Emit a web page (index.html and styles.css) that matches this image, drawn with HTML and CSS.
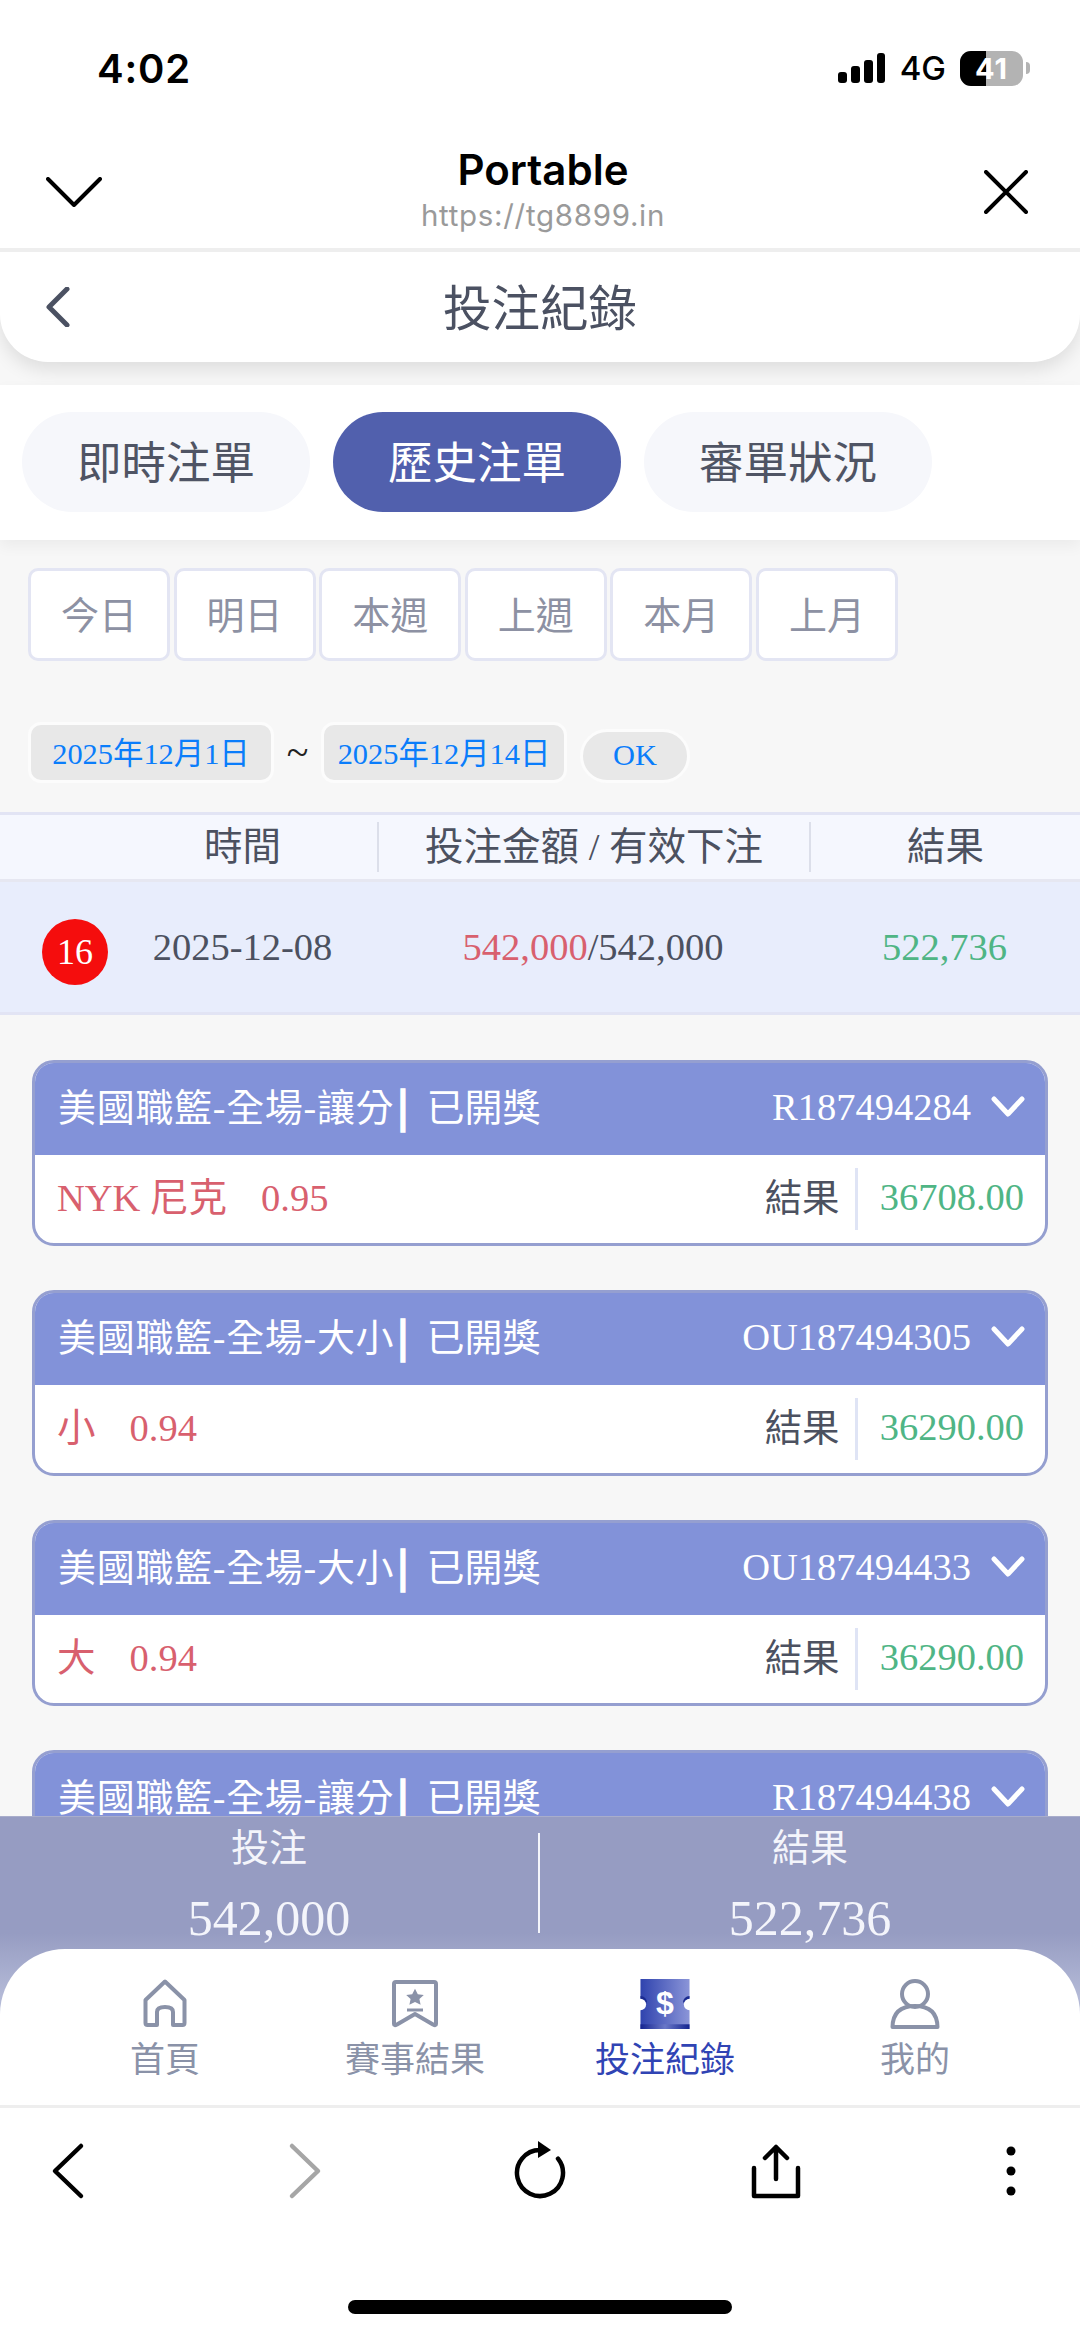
FILE: index.html
```html
<!DOCTYPE html>
<html lang="zh-Hant">
<head>
<meta charset="utf-8">
<title>投注紀錄</title>
<link rel="stylesheet" href="styles.css">
</head>
<body>
<div class="status">
  <span class="time">4:02</span>
  <div class="status-right">
    <svg class="signal" width="47" height="30" viewBox="0 0 47 30"><rect x="0" y="19" width="9" height="11" rx="3"/><rect x="13" y="13" width="9" height="17" rx="3"/><rect x="26" y="7" width="9" height="23" rx="3"/><rect x="39" y="0" width="8" height="30" rx="3"/></svg>
    <span class="net">4G</span>
    <div class="battery"><span class="battery-fill"></span><span class="battery-num">41</span></div>
    <span class="battery-nub"></span>
  </div>
</div>
<header class="portal">
  <svg class="portal-down" width="56" height="30" viewBox="0 0 56 30"><path d="M2 2 L28 28 L54 2" fill="none" stroke="#000" stroke-width="4" stroke-linecap="round" stroke-linejoin="round"/></svg>
  <div class="portal-title"><div class="portal-name">Portable</div><div class="portal-url">https://tg8899.in</div></div>
  <svg class="portal-close" width="44" height="44" viewBox="0 0 44 44"><path d="M2 2 L42 42 M42 2 L2 42" fill="none" stroke="#000" stroke-width="4" stroke-linecap="round"/></svg>
</header>
<main class="main">
  <div class="app-head">
    <svg class="app-back" width="24" height="40" viewBox="0 0 24 40"><path d="M21 2 L3 20 L21 38" fill="none" stroke="#4b5162" stroke-width="5" stroke-linecap="round" stroke-linejoin="round"/></svg>
    <h1 class="app-title">投注紀錄</h1>
  </div>
  <div class="tabs">
    <div class="tab">即時注單</div>
    <div class="tab tab-on">歷史注單</div>
    <div class="tab">審單狀況</div>
  </div>
  <div class="ranges">
    <div class="range">今日</div><div class="range">明日</div><div class="range">本週</div><div class="range">上週</div><div class="range">本月</div><div class="range">上月</div>
  </div>
  <div class="dates">
    <div class="date">2025年12月1日</div>
    <span class="tilde">~</span>
    <div class="date">2025年12月14日</div>
    <div class="ok">OK</div>
  </div>
  <div class="grid-row thead">
    <div></div><div class="th">時間</div><div class="th th-line">投注金額 / 有效下注</div><div class="th th-line">結果</div>
  </div>
  <div class="grid-row tbody">
    <div class="badge-cell"><span class="badge">16</span></div>
    <div class="td">2025-12-08</div>
    <div class="td"><span class="red">542,000</span>/542,000</div>
    <div class="td green">522,736</div>
  </div>
  <div class="cards">
    <article class="card">
      <div class="card-head"><div class="card-title"><span class="league">美國職籃-全場-讓分</span><b class="bar">|</b>已開獎</div><div class="card-id">R187494284</div><svg class="card-chev" width="34" height="22" viewBox="0 0 34 22"><path d="M3 3 L17 18 L31 3" fill="none" stroke="#fff" stroke-width="5" stroke-linecap="round" stroke-linejoin="round"/></svg></div>
      <div class="card-body"><div class="pick"><span>NYK 尼克</span><span>0.95</span></div><div class="res-label">結果</div><div class="res-val">36708.00</div></div>
    </article>
    <article class="card">
      <div class="card-head"><div class="card-title"><span class="league">美國職籃-全場-大小</span><b class="bar">|</b>已開獎</div><div class="card-id">OU187494305</div><svg class="card-chev" width="34" height="22" viewBox="0 0 34 22"><path d="M3 3 L17 18 L31 3" fill="none" stroke="#fff" stroke-width="5" stroke-linecap="round" stroke-linejoin="round"/></svg></div>
      <div class="card-body"><div class="pick"><span>小</span><span>0.94</span></div><div class="res-label">結果</div><div class="res-val">36290.00</div></div>
    </article>
    <article class="card">
      <div class="card-head"><div class="card-title"><span class="league">美國職籃-全場-大小</span><b class="bar">|</b>已開獎</div><div class="card-id">OU187494433</div><svg class="card-chev" width="34" height="22" viewBox="0 0 34 22"><path d="M3 3 L17 18 L31 3" fill="none" stroke="#fff" stroke-width="5" stroke-linecap="round" stroke-linejoin="round"/></svg></div>
      <div class="card-body"><div class="pick"><span>大</span><span>0.94</span></div><div class="res-label">結果</div><div class="res-val">36290.00</div></div>
    </article>
    <article class="card">
      <div class="card-head"><div class="card-title"><span class="league">美國職籃-全場-讓分</span><b class="bar">|</b>已開獎</div><div class="card-id">R187494438</div><svg class="card-chev" width="34" height="22" viewBox="0 0 34 22"><path d="M3 3 L17 18 L31 3" fill="none" stroke="#fff" stroke-width="5" stroke-linecap="round" stroke-linejoin="round"/></svg></div>
    </article>
  </div>
</main>
<section class="bottom">
  <div class="summary">
    <div class="sum-cell"><div class="sum-label">投注</div><div class="sum-val">542,000</div></div>
    <div class="sum-line"></div>
    <div class="sum-cell"><div class="sum-label">結果</div><div class="sum-val">522,736</div></div>
  </div>
  <nav class="nav">
    <div class="nav-item">
      <svg class="nav-icon" width="50" height="50" viewBox="0 0 50 50"><path d="M25 2.500 L44.500 21 V44 Q44.500 46 42.500 46 H33 V33 Q33 28 25 28 Q17 28 17 33 V46 H7.500 Q5.500 46 5.500 44 V21 Z" fill="none" stroke="#8a92a8" stroke-width="4" stroke-linejoin="round"/></svg>
      <span>首頁</span>
    </div>
    <div class="nav-item">
      <svg class="nav-icon" width="50" height="50" viewBox="0 0 50 50"><path d="M4 5 Q4 3 6 3 H44 Q46 3 46 5 V45 Q46 47 43 45.500 L25 35 L7 45.500 Q4 47 4 45 Z" fill="none" stroke="#8a92a8" stroke-width="4" stroke-linejoin="round"/><path d="M25 9 L28.500 16 L36 17 L30.500 22 L32 29 L25 25.500 L18 29 L19.500 22 L14 17 L21.500 16 Z" fill="#8a92a8" transform="translate(5 2.500) scale(.8)"/><path d="M17 31 H33" stroke="#8a92a8" stroke-width="3"/></svg>
      <span>賽事結果</span>
    </div>
    <div class="nav-item nav-on">
      <svg class="nav-icon" width="52" height="53" viewBox="0 0 52 53"><defs><linearGradient id="tk" x1="0" x2="1" y1="0" y2="0"><stop offset="0" stop-color="#2f43ae"/><stop offset="1" stop-color="#8b95d8"/></linearGradient><linearGradient id="tb" x1="0" x2="1" y1="0" y2="0"><stop offset="0" stop-color="#142490"/><stop offset=".5" stop-color="#6a78c8"/><stop offset="1" stop-color="#142490"/></linearGradient></defs><rect width="52" height="53" fill="url(#tk)"/><rect y="48" width="52" height="5" fill="url(#tb)"/><path d="M0 18 A7 7 0 0 1 7 25 L0 25 Z M52 18 A7 7 0 0 0 45 25 L52 25 Z" fill="#1a2a90"/><circle cx="0" cy="27" r="6" fill="#fff"/><circle cx="52" cy="27" r="6" fill="#fff"/><text class="ticket-sign" x="26" y="37">$</text></svg>
      <span>投注紀錄</span>
    </div>
    <div class="nav-item">
      <svg class="nav-icon" width="50" height="50" viewBox="0 0 50 50"><circle cx="25" cy="15" r="13" fill="none" stroke="#8a92a8" stroke-width="4"/><path d="M2.500 48 Q3 27 25 27 Q47 27 47.500 48 Z" fill="none" stroke="#8a92a8" stroke-width="4" stroke-linejoin="round"/></svg>
      <span>我的</span>
    </div>
  </nav>
</section>
<footer class="toolbar">
  <div class="tool-row">
    <svg class="tool" width="60" height="60" viewBox="0 0 60 60"><path d="M42 5 L16 30 L42 55" fill="none" stroke="#000" stroke-width="4.500" stroke-linecap="round" stroke-linejoin="round"/></svg>
    <svg class="tool" width="60" height="60" viewBox="0 0 60 60"><path d="M17 5 L43 30 L17 55" fill="none" stroke="#a6a6a6" stroke-width="4.500" stroke-linecap="round" stroke-linejoin="round"/></svg>
    <svg class="tool" width="60" height="60" viewBox="0 0 60 60"><path d="M30 9 A23 23 0 1 0 48 17.700" fill="none" stroke="#000" stroke-width="4.500" stroke-linecap="round"/><path d="M28 0 L41 9 L28 17 Z" fill="#000"/></svg>
    <svg class="tool" width="60" height="60" viewBox="0 0 60 60"><path d="M30 6 V38 M19 17 L30 6 L41 17" fill="none" stroke="#000" stroke-width="4.500" stroke-linecap="round" stroke-linejoin="round"/><path d="M8 27 V55 H52 V27" fill="none" stroke="#000" stroke-width="4.500" stroke-linecap="round" stroke-linejoin="round"/></svg>
    <svg class="tool" width="60" height="60" viewBox="0 0 60 60"><circle cx="30" cy="10" r="4.500"/><circle cx="30" cy="30" r="4.500"/><circle cx="30" cy="50" r="4.500"/></svg>
  </div>
  <div class="home-bar"></div>
</footer>
</body>
</html>
```
FILE: styles.css
```css
* { box-sizing: border-box; }
html, body { margin: 0; padding: 0; }
body {
  width: 1080px;
  height: 2337px;
  overflow: hidden;
  display: flex;
  flex-direction: column;
  background: #fff;
  font-family: "Liberation Serif", "Noto Sans CJK TC", serif;
  color: #4c5160;
}

/* status bar */
.status {
  height: 116px;
  padding: 20px 50px 0 97px;
  display: flex;
  align-items: center;
  justify-content: space-between;
  font-family: Inter, "Liberation Sans", sans-serif;
  color: #000;
}
.time { font-size: 40px; font-weight: 600; letter-spacing: .8px; }
.status-right { display: flex; align-items: center; }
.signal { fill: #000; }
.net { font-size: 33px; font-weight: 500; margin: 0 14px 0 15px; }
.battery {
  width: 63px;
  height: 35px;
  border-radius: 11px;
  background: #b3b3b3;
  overflow: hidden;
  display: flex;
  align-items: center;
  justify-content: center;
  position: relative;
}
.battery-fill { position: absolute; left: 0; top: 0; bottom: 0; width: 26px; background: #000; }
.battery-num { position: relative; color: #fff; font-size: 29px; font-weight: 700; line-height: 1; letter-spacing: 1px; }
.battery-nub { width: 4px; height: 12px; margin-left: 3px; background: #b3b3b3; border-radius: 0 4px 4px 0; }

/* in-app browser title */
.portal {
  height: 136px;
  padding: 20px 52px 0 46px;
  border-bottom: 4px solid #eee;
  display: flex;
  align-items: center;
  justify-content: space-between;
}
.portal-title { text-align: center; font-family: Inter, "Liberation Sans", sans-serif; }
.portal-name { font-size: 42px; line-height: 46px; font-weight: 600; color: #000; }
.portal-url { font-size: 29.5px; line-height: 44px; color: #9a9a9a; letter-spacing: .7px; }

/* app */
.main {
  flex: 1;
  min-height: 0;
  overflow: hidden;
  background: #f7f7f7;
  display: flex;
  flex-direction: column;
}
.app-head {
  flex: none;
  height: 110px;
  background: #fff;
  border-radius: 0 0 48px 48px;
  box-shadow: 0 8px 18px rgba(0, 0, 0, .1);
  display: grid;
  grid-template-columns: 1fr auto 1fr;
  align-items: center;
  padding-left: 46px;
  margin-bottom: 23px;
  position: relative;
}
.app-back { grid-column: 1; }
.app-title {
  grid-column: 2;
  margin: 0 0 3px -46px;
  font-family: "Noto Sans CJK TC", sans-serif;
  font-size: 48.5px;
  font-weight: 400;
  color: #4b5162;
  line-height: 1;
}
.tabs {
  flex: none;
  height: 155px;
  padding: 27px 22px 28px;
  background: #fff;
  display: flex;
  gap: 23px;
  box-shadow: 0 6px 14px rgba(0, 0, 0, .05);
  position: relative;
}
.tab {
  width: 288px;
  padding-bottom: 5px;
  border-radius: 50px;
  background: #f6f7fb;
  font-family: "Noto Sans CJK TC", sans-serif;
  font-size: 44.5px;
  display: flex;
  align-items: center;
  justify-content: center;
  color: #4f5464;
}
.tab-on { background: #5160ad; color: #fff; }
.ranges { flex: none; display: flex; gap: 3.6px; padding-left: 28px; margin-top: 28px; }
.range {
  width: 142px;
  height: 93px;
  padding-bottom: 5px;
  background: #fff;
  border: 3px solid #e3e5f3;
  border-radius: 10px;
  font-family: "Noto Sans CJK TC", sans-serif;
  font-size: 38px;
  color: #8d91a3;
  display: flex;
  align-items: center;
  justify-content: center;
}
.dates {
  flex: none;
  height: 61px;
  margin-top: 61px;
  padding-left: 28px;
  display: flex;
  align-items: flex-end;
  font-size: 30.4px;
  color: #0a7dfb;
}
.date {
  width: 246px;
  height: 61px;
  padding-bottom: 4px;
  background: #e8e8e8;
  border: 3px solid #fcfcfc;
  border-radius: 13px;
  display: flex;
  align-items: center;
  justify-content: center;
}
.tilde { align-self: center; width: 47px; text-align: center; color: #222; font-size: 40px; line-height: 1; }
.ok {
  width: 110px;
  height: 54px;
  margin-left: 13px;
  padding-bottom: 2px;
  background: #e8e8e8;
  border: 3px solid #fcfcfc;
  border-radius: 27px;
  display: flex;
  align-items: center;
  justify-content: center;
}

/* table */
.grid-row {
  flex: none;
  display: grid;
  grid-template-columns: 108px 269px 432px 1fr;
  align-items: center;
}
.thead {
  height: 70px;
  margin-top: 29px;
  background: #f5f7fe;
  border-top: 3px solid #e2e4f4;
  border-bottom: 3px solid #e6e7f1;
  font-size: 38.5px;
}
.th { text-align: center; height: 50px; line-height: 50px; }
.th-line { border-left: 2px solid #dcdfea; }
.tbody {
  height: 133px;
  background: #e8edfc;
  border-bottom: 3px solid #e2e4f4;
  font-size: 38.5px;
}
.badge-cell { padding: 10px 0 0 42px; }
.badge {
  width: 66px;
  height: 66px;
  border-radius: 50%;
  background: #f50d0d;
  color: #fff;
  font-size: 36px;
  display: flex;
  align-items: center;
  justify-content: center;
}
.td { text-align: center; }
.red { color: #d8606e; }
.green { color: #4fb585; }

/* bet cards */
.cards { flex: none; padding: 45px 32px 0 32px; display: flex; flex-direction: column; gap: 44px; }
.card {
  height: 186px;
  flex: none;
  border-radius: 22px;
  border: 3px solid #959fd0;
  overflow: hidden;
  background: #fff;
}
.card-head {
  height: 92px;
  padding: 0 20px 4px 23px;
  background: #8292d9;
  color: #fff;
  display: flex;
  align-items: center;
  font-size: 38px;
}
.card-title { flex: 1; padding-bottom: 6px; white-space: pre; }
.league { letter-spacing: .7px; }
.bar {
  margin: 0 18px 0 3px;
  font-family: "Noto Sans CJK TC", sans-serif;
  font-weight: 700;
  -webkit-text-stroke: 1.5px #fff;
}
.card-id { font-size: 38.5px; margin-right: 20px; }
.card-body {
  height: 88px;
  padding: 0 21px 0 22px;
  display: flex;
  align-items: center;
  font-size: 38.5px;
}
.pick { flex: 1; padding-bottom: 10px; display: flex; align-items: baseline; gap: 34px; color: #d8606e; }
.res-label { padding: 0 15px 10px 0; font-size: 37.5px; }
.res-val {
  height: 62px;
  line-height: 58px;
  padding-left: 22px;
  border-left: 3px solid #dfe4f5;
  color: #4fb585;
}

/* totals + tab bar */
.bottom {
  flex: none;
  background: linear-gradient(#969cc2 40%, #b4bad7 62%, #a9afd0);
}
.summary {
  height: 133px;
  display: grid;
  grid-template-columns: 538px 2px 1fr;
  border-top: 1px solid #a9adcb;
  color: #f4f5fb;
}
.sum-cell { text-align: center; }
.sum-label { font-size: 38px; line-height: 63px; }
.sum-val { font-size: 50px; line-height: 60px; margin-top: 8px; }
.sum-line { margin-top: 16px; height: 100px; background: #f4f5fb; }
.nav {
  height: 159px;
  padding: 30px 40px 0;
  background: #fff;
  border-bottom: 3px solid #eee;
  border-radius: 65px 65px 0 0;
  display: grid;
  grid-template-columns: repeat(4, 1fr);
}
.nav-item {
  display: flex;
  flex-direction: column;
  align-items: center;
  font-family: "Noto Sans CJK TC", sans-serif;
  font-size: 35px;
  line-height: 46px;
  color: #8a92a8;
}
.nav-icon { height: 50px; margin-bottom: 5px; flex: none; }
.nav-on { color: #3044b4; }
.ticket-sign { fill: #fff; font: 700 34px "Liberation Sans", sans-serif; text-anchor: middle; }

/* browser toolbar */
.toolbar { flex: none; height: 229px; display: flex; flex-direction: column; align-items: center; }
.tool-row { width: 100%; padding: 33px 39px 0; display: flex; justify-content: space-between; }
.tool { flex: none; fill: #000; }
.home-bar { width: 384px; height: 14px; margin-top: 99px; border-radius: 7px; background: #000; }
```
